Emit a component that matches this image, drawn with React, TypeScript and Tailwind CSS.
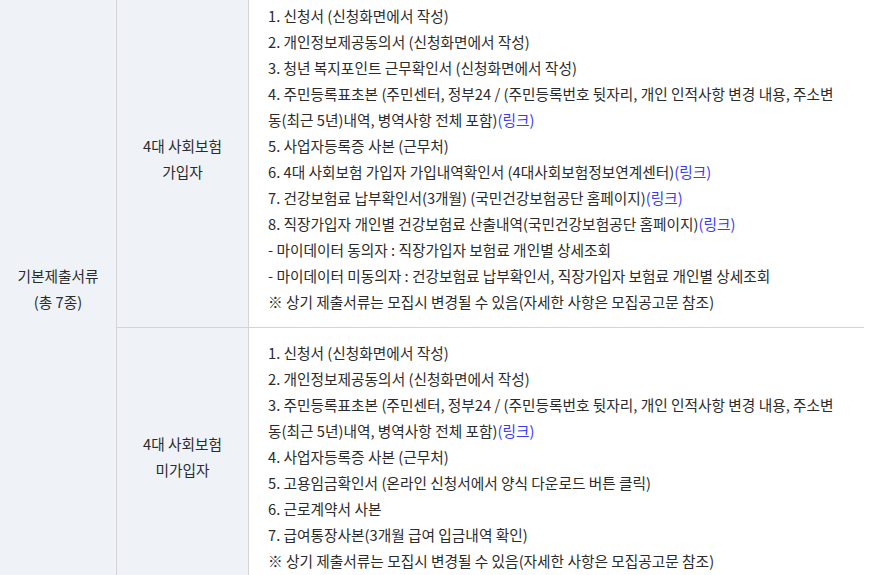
const font = { fontFamily: '"Noto Sans CJK KR", "Noto Sans", sans-serif' }

function Link() {
  return <span className="text-[#3b3bf2]">(링크)</span>
}

const joined = [
  <>1. 신청서 (신청화면에서 작성)</>,
  <>2. 개인정보제공동의서 (신청화면에서 작성)</>,
  <>3. 청년 복지포인트 근무확인서 (신청화면에서 작성)</>,
  <>
    4. 주민등록표초본 (주민센터, 정부24 / (주민등록번호 뒷자리, 개인 인적사항 변경 내용, 주소변동(최근
    5년)내역, 병역사항 전체 포함)<Link />
  </>,
  <>5. 사업자등록증 사본 (근무처)</>,
  <>
    6. 4대 사회보험 가입자 가입내역확인서 (4대사회보험정보연계센터)<Link />
  </>,
  <>
    7. 건강보험료 납부확인서(3개월) (국민건강보험공단 홈페이지)<Link />
  </>,
  <>
    8. 직장가입자 개인별 건강보험료 산출내역(국민건강보험공단 홈페이지)<Link />
  </>,
  <>- 마이데이터 동의자 : 직장가입자 보험료 개인별 상세조회</>,
  <>- 마이데이터 미동의자 : 건강보험료 납부확인서, 직장가입자 보험료 개인별 상세조회</>,
  <>※ 상기 제출서류는 모집시 변경될 수 있음(자세한 사항은 모집공고문 참조)</>,
]

const notJoined = [
  <>1. 신청서 (신청화면에서 작성)</>,
  <>2. 개인정보제공동의서 (신청화면에서 작성)</>,
  <>
    3. 주민등록표초본 (주민센터, 정부24 / (주민등록번호 뒷자리, 개인 인적사항 변경 내용, 주소변동(최근
    5년)내역, 병역사항 전체 포함)<Link />
  </>,
  <>4. 사업자등록증 사본 (근무처)</>,
  <>5. 고용임금확인서 (온라인 신청서에서 양식 다운로드 버튼 클릭)</>,
  <>6. 근로계약서 사본</>,
  <>7. 급여통장사본(3개월 급여 입금내역 확인)</>,
  <>※ 상기 제출서류는 모집시 변경될 수 있음(자세한 사항은 모집공고문 참조)</>,
]

function Row({ label, items }: { label: string[]; items: React.ReactNode[] }) {
  return (
    <div className="flex border-b border-[#d4d4d4]">
      <div className="w-[132px] shrink-0 border-r border-[#d4d4d4] bg-[#eff3f8] flex flex-col items-center justify-center text-center">
        {label.map((l) => (
          <div key={l}>{l}</div>
        ))}
      </div>
      <div className="flex-1 pl-[19px] pr-[21px] py-3">
        {items.map((it, i) => (
          <div key={i}>{it}</div>
        ))}
      </div>
    </div>
  )
}

export default function App() {
  return (
    <div className="h-[575px] w-[878px] overflow-hidden bg-white" style={font}>
      <div className="-mt-[9px] w-[864px] flex text-[14.7px] leading-[26px] text-[#2b2b2b]">
        <div className="w-[117px] shrink-0 border-r border-[#d4d4d4] bg-[#eff3f8] flex flex-col items-center justify-center text-center">
          <div>기본제출서류</div>
          <div>(총 7종)</div>
        </div>
        <div className="flex-1 flex flex-col">
          <Row label={["4대 사회보험", "가입자"]} items={joined} />
          <Row label={["4대 사회보험", "미가입자"]} items={notJoined} />
        </div>
      </div>
    </div>
  )
}
